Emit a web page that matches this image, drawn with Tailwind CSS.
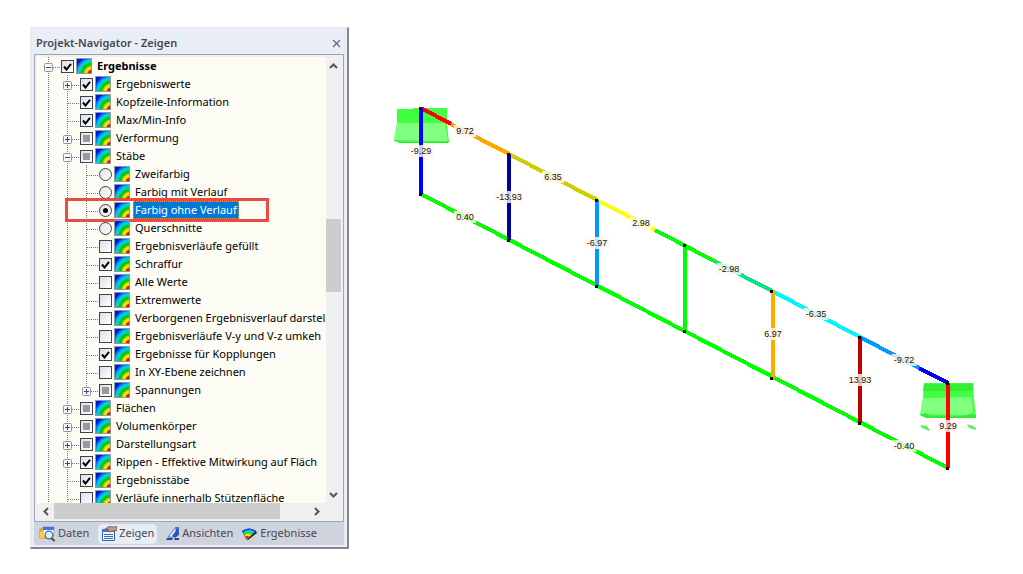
<!DOCTYPE html>
<html lang="de">
<head>
    <meta charset="UTF-8">
    <meta name="viewport" content="width=device-width, initial-scale=1.0">
    <title>Projekt-Navigator - Zeigen</title>
    <script src="https://cdn.jsdelivr.net/npm/@tailwindcss/browser@4"></script>
</head>
<body class="bg-white min-h-screen flex items-start font-['Noto_Sans','Open_Sans',sans-serif] text-[11px] text-black">

    <!-- shared icons -->
    <svg class="hidden">
        <symbol id="rainbow" viewBox="0 0 16 16">
            <rect width="16" height="16" fill="#94989c"/>
            <svg x="1" y="1" width="14" height="14" viewBox="0 0 14 14">
                <rect width="14" height="14" fill="#0018d8"/>
                <circle cx="15" cy="15" r="17" fill="#0070ff"/>
                <circle cx="15" cy="15" r="15" fill="#00c8f8"/>
                <circle cx="15" cy="15" r="13" fill="#00d8a0"/>
                <circle cx="15" cy="15" r="11.500" fill="#10c020"/>
                <circle cx="15" cy="15" r="8.500" fill="#a0e000"/>
                <circle cx="15" cy="15" r="7" fill="#ffe400"/>
                <circle cx="15" cy="15" r="5" fill="#ff9000"/>
                <circle cx="15" cy="15" r="4" fill="#e00000"/>
            </svg>
        </symbol>
    </svg>

    <aside class="w-[319px] shrink-0 mt-[27px] ml-[30px] mb-6 bg-[#e9edf6] border border-[#e4e8f1] border-r-2 border-b-2 border-r-[#85878f] border-b-[#85878f] px-[3px] pb-[2px]">
        <header class="h-[26px] flex items-center justify-between pl-[2px] pr-[2px] pt-[4px]">
            <h1 class="text-[11px] font-semibold text-[#45474d]">Projekt-Navigator - Zeigen</h1>
            <button type="button" aria-label="Schließen" class="size-[12px] grid place-items-center">
                <svg width="9" height="9" viewBox="0 0 9 9" fill="none" stroke="#6c6e76" stroke-width="1.4"><path d="M1 1l7 7M8 1l-7 7"/></svg>
            </button>
        </header>

        <div class="border border-[#a2a5b1] bg-[#f0f0f0] pl-[2px] pt-[2px] pr-[2px]">
            <div class="flex">
                <ul id="tree" class="flex-1 min-w-0 h-[446px] overflow-hidden bg-[#fcfcf4] pl-[2px]"></ul>
                <div class="w-[15px] flex flex-col items-center bg-[#f0f0f0]">
                    <button type="button" aria-label="Nach oben" class="h-[17px] w-full grid place-items-center">
                        <svg width="9" height="6" viewBox="0 0 9 6" fill="none" stroke="#555" stroke-width="2"><path d="M1 5l3.500-3.500L8 5"/></svg>
                    </button>
                    <div class="mt-[145px] h-[73px] w-full bg-[#cdcdcd]"></div>
                    <button type="button" aria-label="Nach unten" class="mt-auto h-[17px] w-full grid place-items-center">
                        <svg width="9" height="6" viewBox="0 0 9 6" fill="none" stroke="#555" stroke-width="2"><path d="M1 1l3.500 3.500L8 1"/></svg>
                    </button>
                </div>
            </div>
            <div class="h-[18px] flex items-start pr-[16px]">
                <button type="button" aria-label="Nach links" class="h-[16px] w-[17px] grid place-items-center">
                    <svg width="6" height="9" viewBox="0 0 6 9" fill="none" stroke="#555" stroke-width="2"><path d="M5 1L1.500 4.500 5 8"/></svg>
                </button>
                <div class="h-[16px] w-[226px] bg-[#cdcdcd]"></div>
                <button type="button" aria-label="Nach rechts" class="ml-auto h-[16px] w-[17px] grid place-items-center">
                    <svg width="6" height="9" viewBox="0 0 6 9" fill="none" stroke="#555" stroke-width="2"><path d="M1 1l3.500 3.500L1 8"/></svg>
                </button>
            </div>
        </div>

        <nav class="h-[23px] flex items-center gap-[9px] bg-[#cfd3dd] pl-[5px] text-[11px] text-[#454952]">
            <button type="button" class="flex items-center gap-[2px]">
                <svg width="17" height="16" viewBox="0 0 17 16">
                    <path d="M1 3h4l1 1h2v8H1z" fill="#f5bd22" stroke="#c58e10"/>
                    <path d="M4 1h11v9H4z" fill="#f4f8ff" stroke="#8ba9da"/>
                    <path d="M4 1h11v3H4z" fill="#3b79dc"/>
                    <path d="M1 6h4v6H1z" fill="#ffd02c"/>
                    <circle cx="10" cy="9" r="3.800" fill="#d6ecff" stroke="#606e82" stroke-width="1.300"/>
                    <path d="M12.500 12l3 3" stroke="#5c4a42" stroke-width="2.200"/>
                </svg>
                Daten
            </button>
            <button type="button" class="flex items-center gap-[2px] h-[20px] px-[2px] bg-[#e9edf3] border border-[#d9eff3] rounded-sm">
                <svg width="16" height="16" viewBox="0 0 16 16">
                    <path d="M1.500 3.500h12v11h-12z" fill="#f2f7ff" stroke="#2d62b8"/>
                    <path d="M1 3h13v3H1z" fill="#3c78d2"/>
                    <path d="M3 8.500h9M3 10.500h9M3 12.500h9" stroke="#3769b3"/>
                    <path d="M4 3l4-2.500 4 .5 4-.5v4l-4 .5-3 1-3-1 2-1.500z" fill="#c99a75" stroke="#5e4b42" stroke-width=".7"/>
                </svg>
                Zeigen
            </button>
            <button type="button" class="flex items-center gap-[2px]">
                <svg width="14" height="16" viewBox="0 0 14 16">
                    <path d="M10 1h3v8l-3 2-4-2z" fill="#4474dc"/>
                    <path d="M10 1L2 11h5l3-3z" fill="#e6eeff" stroke="#5577c4"/>
                    <path d="M12 2L6 10l3 2 4-4z" fill="#2a55be"/>
                    <path d="M1 12h6l-1 2H0zM9 12h4v2H8z" fill="#2449a8"/>
                </svg>
                Ansichten
            </button>
            <button type="button" class="flex items-center gap-[3px]">
                <svg width="15" height="14" viewBox="0 0 15 14">
                    <path d="M0 4Q7-1 14 4l1 2-9 7-2-1z" fill="#26262b"/>
                    <path d="M0 4Q7-1 14 4l-9 8z" fill="#1455e8"/>
                    <path d="M1 5.500Q7 1 12.500 5L5 12z" fill="#12c9d8"/>
                    <path d="M1.800 7Q7 3 11 6.500L5 12z" fill="#36d82c"/>
                    <path d="M2.500 8.300Q6 5.500 9 8L5 12z" fill="#f8e400"/>
                    <path d="M3.300 9.700Q5 8 7.400 9.500L5 12z" fill="#ee2814"/>
                </svg>
                Ergebnisse
            </button>
        </nav>
    </aside>

    <!-- truss with member forces -->
    <main class="flex-1 min-w-0">
        <svg id="model" class="w-full h-auto" viewBox="349 0 674 574" role="img" aria-label="Stabkräfte">
            <g id="supports" stroke="none">
                <path d="M397 109h16v-1h34v16l2 18-4 1h-45l-6-2 3-18z" fill="#40ff40"/>
                <path d="M397 123h48l3 18-54-1z" fill="#80ff80"/>
                <path d="M395 140l5 2h45l4-1-1 2h-48z" fill="#30e030"/>
                <path d="M924 383h49l1 16 2 18h-50l-6-2 3-17z" fill="#40ff40"/>
                <path d="M924 384h49v7h-50z" fill="#35ed35"/>
                <path d="M923 398l49-1 1 15-3 3-49-1z" fill="#80ff80"/>
                <path d="M920 415l6-2 4 3h35l4-2 7 1v3h-50z" fill="#38e838"/>
                <path d="M920 425l7 1 2 3v2l-7-3zM967 424l6 2 3 2v2l-7-2z" fill="#60ee60"/>
            </g>
            <g id="members" stroke-width="4" shape-rendering="crispEdges"></g>
            <g id="nodes" fill="#200000" shape-rendering="crispEdges"></g>
            <g id="values" class="font-['Liberation_Sans',Arial,sans-serif] text-[9px]" text-anchor="middle"></g>
        </svg>
    </main>

    <script>
        // level, label, control, expander
        const rows = [
            [0, 'Ergebnisse', 'on', '-'],
            [1, 'Ergebniswerte', 'on', '+'],
            [1, 'Kopfzeile-Information', 'on', ''],
            [1, 'Max/Min-Info', 'on', ''],
            [1, 'Verformung', 'mixed', '+'],
            [1, 'Stäbe', 'mixed', '-'],
            [2, 'Zweifarbig', 'radio', ''],
            [2, 'Farbig mit Verlauf', 'radio', ''],
            [2, 'Farbig ohne Verlauf', 'radio-on', ''],
            [2, 'Querschnitte', 'radio', ''],
            [2, 'Ergebnisverläufe gefüllt', 'off', ''],
            [2, 'Schraffur', 'on', ''],
            [2, 'Alle Werte', 'off', ''],
            [2, 'Extremwerte', 'off', ''],
            [2, 'Verborgenen Ergebnisverlauf darstel', 'off', ''],
            [2, 'Ergebnisverläufe V-y und V-z umkeh', 'off', ''],
            [2, 'Ergebnisse für Kopplungen', 'on', ''],
            [2, 'In XY-Ebene zeichnen', 'off', ''],
            [2, 'Spannungen', 'mixed', '+'],
            [1, 'Flächen', 'mixed', '+'],
            [1, 'Volumenkörper', 'mixed', '+'],
            [1, 'Darstellungsart', 'mixed', '+'],
            [1, 'Rippen - Effektive Mitwirkung auf Fläch', 'on', '+'],
            [1, 'Ergebnisstäbe', 'on', ''],
            [1, 'Verläufe innerhalb Stützenfläche', 'off', ''],
        ];

        const dots = 'stroke="#777" stroke-dasharray="1 1" fill="none"';

        function branch(level, sign, last) {
            const guides = '<svg class="shrink-0" width="19" height="18"><path d="M9.500 0v18" ' + dots + '/></svg>';
            let box = '';
            if (sign) {
                box = '<rect x="5.500" y="6.500" width="8" height="8" rx="1" fill="#f6f6f6" stroke="#929292"/>' +
                    '<path d="M7 10.500h5' + (sign === '+' ? 'M9.500 8v5' : '') + '" stroke="#304b94"/>';
            }
            return guides.repeat(level) +
                '<svg class="shrink-0" width="22" height="18"><path d="M9.500 0v' + (last ? 10 : 18) + 'M10 10.500h11" ' + dots + '/>' + box + '</svg>';
        }

        function control(kind, id) {
            if (kind.startsWith('radio')) {
                const on = kind === 'radio-on';
                return '<span class="grid shrink-0 place-items-center *:col-start-1 *:row-start-1">' +
                    '<input type="radio" name="farbe" id="' + id + '"' + (on ? ' checked' : '') + ' class="appearance-none size-[13px] rounded-full border border-[#404040] bg-linear-to-br from-[#dfe2e8] to-white">' +
                    (on ? '<span class="size-[5px] rounded-full bg-black pointer-events-none"></span>' : '') + '</span>';
            }
            let mark = '';
            if (kind === 'on') mark = '<svg class="pointer-events-none" width="9" height="9" viewBox="0 0 9 9"><path d="M1 4.500l2.500 3L8 1.800" fill="none" stroke="#000" stroke-width="2"/></svg>';
            if (kind === 'mixed') mark = '<span class="size-[7px] bg-[#999] pointer-events-none"></span>';
            return '<span class="grid shrink-0 place-items-center *:col-start-1 *:row-start-1">' +
                '<input type="checkbox" id="' + id + '"' + (kind === 'on' ? ' checked' : '') + ' class="appearance-none size-[13px] border border-[#404448] bg-linear-to-br from-[#dcdfe7] to-white">' + mark + '</span>';
        }

        document.getElementById('tree').innerHTML = rows.map(([level, label, kind, sign], i) => {
            const selected = kind === 'radio-on';
            const text = selected ? 'h-full px-[2px] bg-[#0078d7] text-white outline-1 -outline-offset-1 outline-dotted outline-[#ff9933]' :
                level === 0 ? 'px-[2px] font-bold' : 'px-[2px]';
            return '<li class="relative flex items-center h-[18px] whitespace-nowrap leading-[18px] text-[11px]">' +
                branch(level, sign, label === 'Spannungen') + control(kind, 'row' + i) +
                '<svg class="shrink-0 ml-[2px] mr-[3px] size-[16px]"><use href="#rainbow"/></svg>' +
                '<label for="row' + i + '" class="' + text + '">' + label + '</label>' +
                (selected ? '<span class="absolute left-[26px] -top-[3px] w-[204px] h-[24px] border-3 border-[#e94b43] pointer-events-none"></span>' : '') +
                '</li>';
        }).join('');

        document.querySelectorAll('#tree input[type=checkbox]').forEach((box) => {
            const i = Number(box.id.slice(3));
            box.indeterminate = rows[i][2] === 'mixed';
        });

        // x1, y1, x2, y2, colour
        const members = [
            [421, 194, 948, 468, '#00ff00'],
            [421, 108, 451, 124, '#ff0000'],
            [451, 124, 509, 154, '#ffa500'],
            [509, 154, 597, 200, '#cfcf00'],
            [597, 200, 655, 230, '#ffff00'],
            [655, 230, 716, 262, '#00ff00'],
            [716, 262, 772, 291, '#00e68a'],
            [772, 291, 860, 337, '#00f6ff'],
            [860, 337, 919, 368, '#0099ff'],
            [919, 368, 948, 383, '#0000ff'],
            [421, 108, 421, 194, '#0000ff'],
            [509, 154, 509, 240, '#0000a0'],
            [597, 200, 597, 286, '#0099ff'],
            [685, 245, 685, 331, '#00ff00'],
            [773, 291, 773, 378, '#ffaa00'],
            [860, 337, 860, 423, '#c00000'],
            [948, 383, 948, 468, '#ff0000'],
        ];
        document.getElementById('members').innerHTML = members.map(([x1, y1, x2, y2, c]) =>
            `<line x1="${x1}" y1="${y1}" x2="${x2}" y2="${y2}" stroke="${c}"/>`).join('');

        const nodes = [[421, 108], [509, 154], [597, 200], [685, 245], [772, 291], [860, 337], [948, 383],
            [421, 194], [509, 240], [597, 286], [685, 331], [772, 378], [860, 423], [948, 468]];
        document.getElementById('nodes').innerHTML = nodes.map(([x, y]) =>
            `<rect x="${x - 2}" y="${y - 1}" width="3" height="3"/>`).join('');

        // x, y, member force
        const values = [
            [465, 131, '9.72'], [553, 177, '6.35'], [641, 223, '2.98'], [729, 269, '-2.98'],
            [816, 314, '-6.35'], [904, 360, '-9.72'], [421, 151, '-9.29'], [509, 197, '-13.93'],
            [597, 243, '-6.97'], [773, 334, '6.97'], [860, 380, '13.93'], [948, 426, '9.29'],
            [465, 217, '0.40'], [904, 446, '-0.40'],
        ];
        document.getElementById('values').innerHTML = values.map(([x, y, v]) => {
            const w = v.length * 3 + 10;
            return `<rect x="${x - w / 2}" y="${y - 6}" width="${w}" height="12" fill="#fff8ee" fill-opacity=".8"/>` +
                `<text x="${x}" y="${y + 3}" fill="#111">${v}</text>`;
        }).join('');
    </script>
</body>
</html>
